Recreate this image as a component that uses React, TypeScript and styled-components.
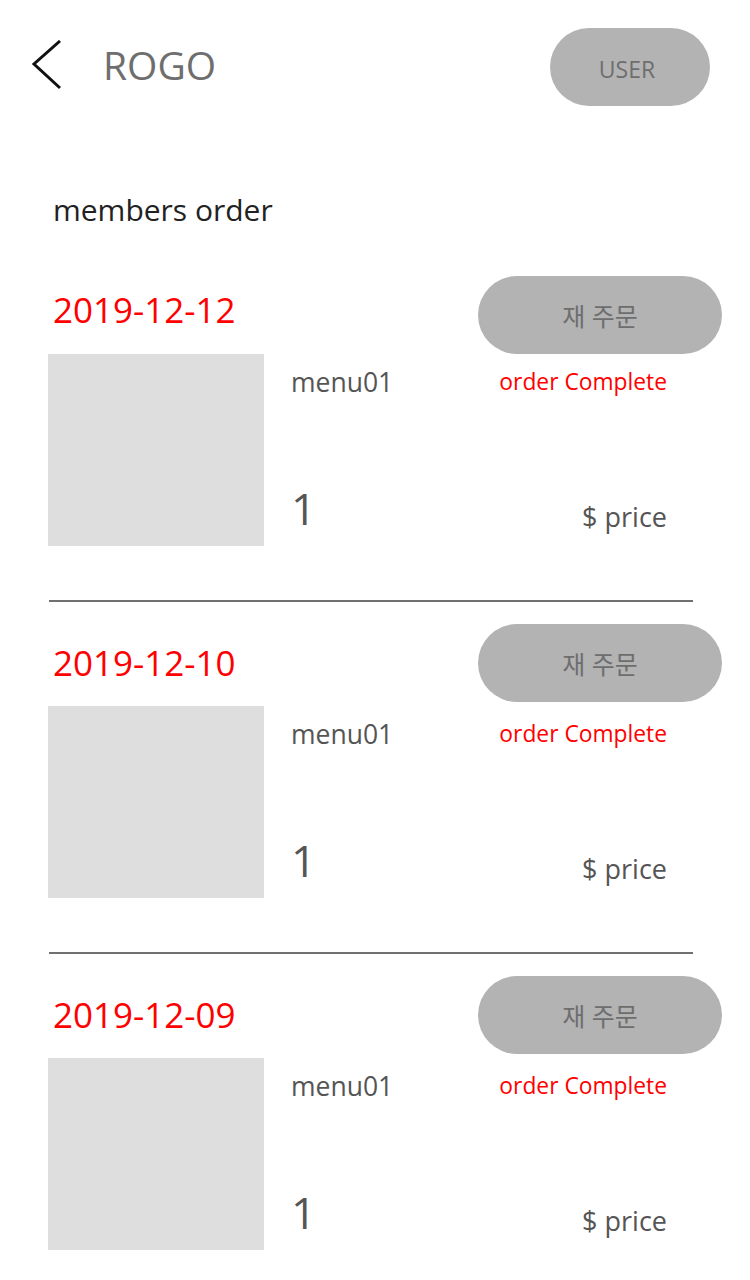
import React from "react";
import styled, { createGlobalStyle } from "styled-components";

const Global = createGlobalStyle`
  html, body { margin: 0; padding: 0; background: #ffffff; }
  body { font-family: "Open Sans", "Noto Sans CJK KR", sans-serif; }
  * { box-sizing: border-box; }
`;

const Page = styled.div`
  width: 750px;
  min-height: 1280px;
  background: #ffffff;
  overflow: hidden;
`;

const Header = styled.header`
  display: flex;
  align-items: center;
  height: 78px;
  margin-top: 28px;
  padding: 0 40px 0 31px;
`;

const BackIcon = styled.svg`
  width: 32px;
  height: 50px;
  flex: none;
  margin-top: -4px;
`;

const Logo = styled.h1`
  margin: -6px 0 0 40px;
  font-size: 39px;
  font-weight: 400;
  color: #6e6e6e;
  line-height: 1;
`;

const PillButton = styled.button<{ $w: number; $size: number }>`
  width: ${(p) => p.$w}px;
  height: 78px;
  border: none;
  border-radius: 39px;
  background: #b3b3b3;
  color: #6e6e6e;
  font-family: "Open Sans", "Noto Sans CJK KR", sans-serif;
  font-size: ${(p) => p.$size}px;
  padding: 0;
  display: flex;
  align-items: center;
  justify-content: center;
  flex: none;
`;

const UserButton = styled(PillButton)`
  margin-left: auto;
  padding: 4px 6px 0 0;
`;

const Title = styled.h2`
  margin: 87px 0 0 53px;
  font-size: 30px;
  font-weight: 400;
  color: #222222;
  line-height: 34px;
`;

const List = styled.div`
  margin-top: 49px;
  display: flex;
  flex-direction: column;
`;

const Order = styled.section`
  display: flex;
  flex-direction: column;
  padding: 0 28px 0 48px;
`;

const OrderHead = styled.div`
  display: flex;
  justify-content: space-between;
  align-items: flex-start;
  height: 78px;
`;

const DateText = styled.div<{ $top: number }>`
  margin: ${(p) => p.$top}px 0 0 5px;
  font-size: 35px;
  color: #ff0000;
  line-height: 40px;
`;

const OrderBody = styled.div<{ $gap: number }>`
  display: flex;
  height: 192px;
  margin-top: ${(p) => p.$gap}px;
`;

const Thumb = styled.div`
  width: 216px;
  height: 192px;
  background: #dedede;
  flex: none;
`;

const Info = styled.div`
  display: grid;
  grid-template-columns: 1fr auto;
  grid-template-rows: auto 1fr;
  width: 376px;
  margin-left: 27px;
  padding-top: 12px;
`;

const MenuName = styled.div`
  font-size: 26.5px;
  color: #555555;
  line-height: 32px;
`;

const Status = styled.div`
  font-size: 22.8px;
  color: #ff0000;
  line-height: 32px;
  text-align: right;
`;

const Qty = styled.div`
  align-self: end;
  font-size: 44px;
  color: #555555;
  line-height: 56px;
  margin-bottom: 10px;
`;

const Price = styled.div`
  align-self: end;
  text-align: right;
  font-size: 27px;
  color: #555555;
  line-height: 34px;
  margin-bottom: 12px;
`;

const Divider = styled.hr`
  margin: 54px 29px 22px 1px;
  border: none;
  height: 2px;
  background: #707070;
`;

const orders = ["2019-12-12", "2019-12-10", "2019-12-09"];

export default function App() {
  return (
    <Page>
      <Global />
      <Header>
        <BackIcon viewBox="0 0 32 50">
          <polyline points="29,1 3,24 29,48" fill="none" stroke="#111" strokeWidth="3" />
        </BackIcon>
        <Logo>ROGO</Logo>
        <UserButton $w={160} $size={23}>USER</UserButton>
      </Header>
      <Title>members order</Title>
      <List>
        {orders.map((d, i) => (
          <Order key={d}>
            <OrderHead>
              <DateText $top={i === 0 ? 14 : 19}>{d}</DateText>
              <PillButton $w={244} $size={25}>재 주문</PillButton>
            </OrderHead>
            <OrderBody $gap={i === 0 ? 0 : 4}>
              <Thumb />
              <Info>
                <MenuName>menu01</MenuName>
                <Status>order Complete</Status>
                <Qty>1</Qty>
                <Price>$ price</Price>
              </Info>
            </OrderBody>
            {i < orders.length - 1 && <Divider />}
          </Order>
        ))}
      </List>
    </Page>
  );
}
